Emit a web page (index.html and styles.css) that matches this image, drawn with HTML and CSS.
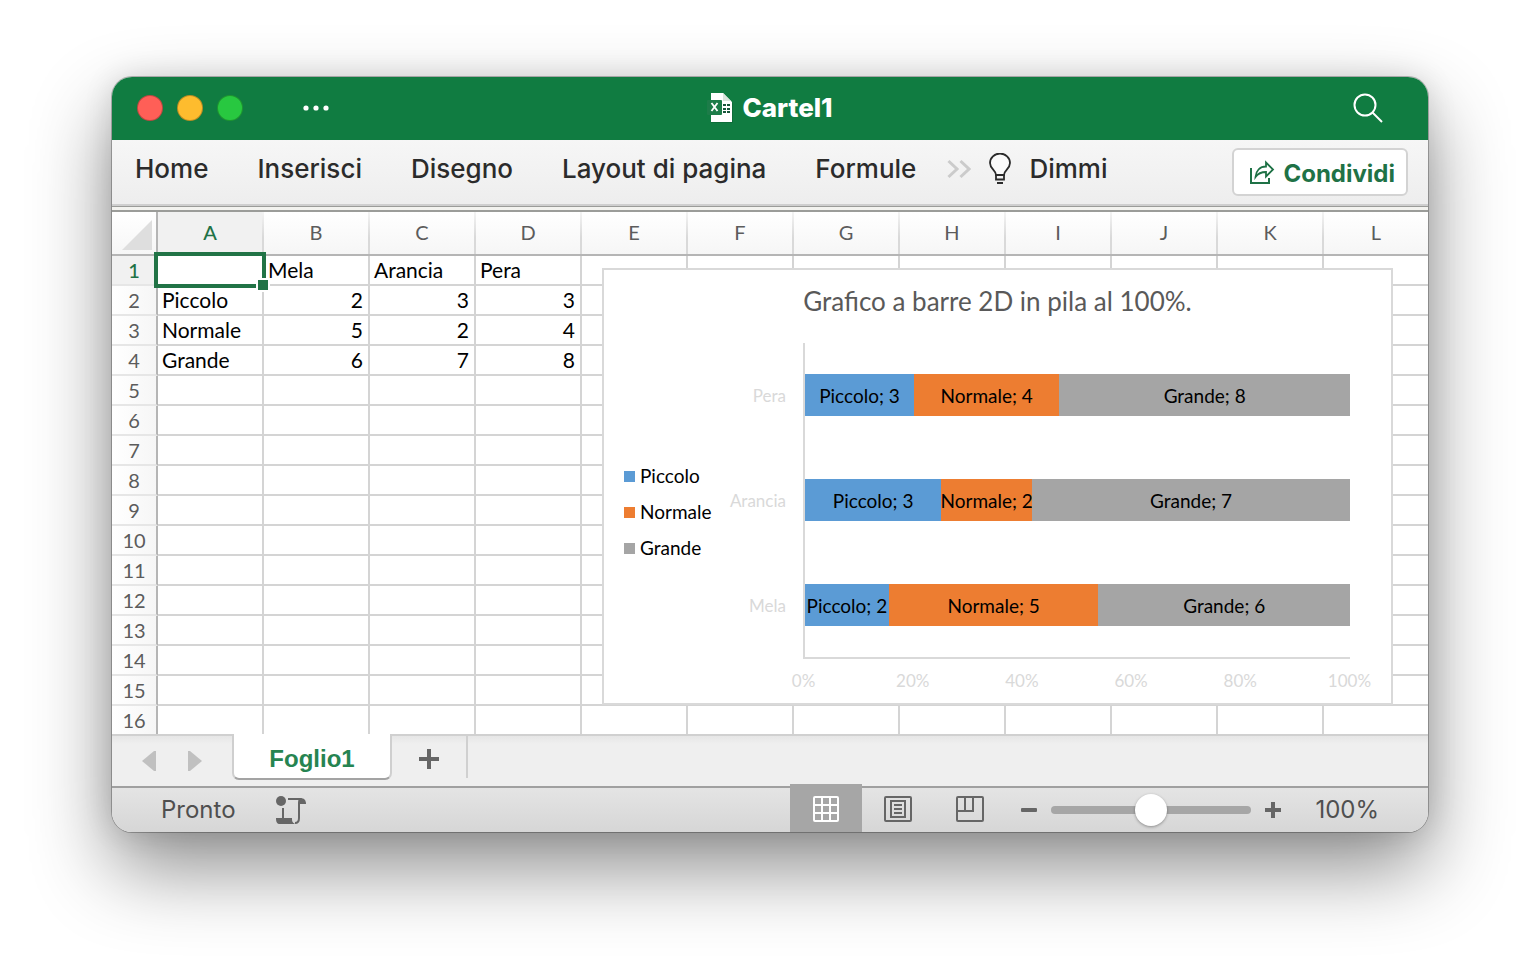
FILE: index.html
```html
<!DOCTYPE html>
<html lang="it">
<head>
    <meta charset="utf-8">
    <title>Cartel1</title>
    <link rel="stylesheet" href="styles.css">
</head>
<body>
    <div class="window">
        <header class="title-bar">
            <div class="title-left">
                <button class="light red" aria-label="Chiudi"></button>
                <button class="light yellow" aria-label="Riduci"></button>
                <button class="light green" aria-label="Ingrandisci"></button>
                <button class="icon-button more" aria-label="Altro">
                    <svg width="26" height="6" viewBox="0 0 26 6" fill="#fff"><circle cx="3" cy="3" r="2.6"/><circle cx="13" cy="3" r="2.6"/><circle cx="23" cy="3" r="2.6"/></svg>
                </button>
            </div>
            <h1 class="document-name">
                <svg width="26" height="32" viewBox="0 0 26 32">
                    <path d="M4 2h12l10 9v20H4z" fill="#0b5c2f" opacity=".5"/>
                    <path d="M4 1h12l9 9v20H4z" fill="#fff"/>
                    <path d="M16 1v8h8z" fill="#d9e5dc"/>
                    <path d="M16 12h3v2h-3zM20 12h3v2h-3zM16 16h3v2h-3zM20 16h3v2h-3zM16 19h3v2h-3zM20 19h3v2h-3z" fill="#17563a"/>
                    <rect x="0" y="8" width="15" height="15" rx="1" fill="#1d7c49"/>
                    <path d="M4.500 11l6 8M10.500 11l-6 8" stroke="#fff" stroke-width="1.800"/>
                </svg>
                Cartel1
            </h1>
            <button class="icon-button search" aria-label="Cerca">
                <svg width="30" height="30" viewBox="0 0 30 30" fill="none" stroke="#fff" stroke-width="2"><circle cx="12" cy="12" r="10.5"/><path d="M19.5 19.5L29 29"/></svg>
            </button>
        </header>

        <nav class="ribbon">
            <button class="ribbon-tab">Home</button>
            <button class="ribbon-tab">Inserisci</button>
            <button class="ribbon-tab">Disegno</button>
            <button class="ribbon-tab">Layout di pagina</button>
            <button class="ribbon-tab">Formule</button>
            <div class="ribbon-help">
                <button class="icon-button" aria-label="Altre schede">
                    <svg width="24" height="20" viewBox="0 0 24 20" fill="none" stroke="#cbcbcb" stroke-width="3"><path d="M1.500 2l8.500 8-8.500 8M13.500 2l8.500 8-8.500 8"/></svg>
                </button>
                <button class="ribbon-tab tell-me">
                    <svg width="22" height="32" viewBox="0 0 22 32" fill="none" stroke="#2b2b2b" stroke-width="1.800">
                        <path d="M7 22c0-5-6-6-6-12a10 9.500 0 0 1 20 0c0 6-6 7-6 12z" fill="#fafafa"/>
                        <path d="M7 22v4.500h8V22"/>
                        <path d="M8 30h6" stroke-width="2"/>
                    </svg>
                    Dimmi
                </button>
            </div>
            <button class="share">
                <svg width="26" height="26" viewBox="0 0 26 26" fill="none" stroke="#1f7246" stroke-width="2">
                    <path d="M2 8v15h18v-5"/>
                    <path d="M6.500 17C7 10.500 11 6.500 17 6.500V2.500l7 7-7 7v-4.500c-5 0-8 1.500-10.500 5z" stroke-width="1.800"/>
                </svg>
                Condividi
            </button>
        </nav>

        <main class="sheet">
            <table class="cells">
                <thead>
                    <tr>
                        <th class="corner"><svg width="30" height="30" viewBox="0 0 30 30"><path d="M30 0v30H0z" fill="#dedede"/></svg></th>
                        <th class="active">A</th><th>B</th><th>C</th><th>D</th><th>E</th><th>F</th><th>G</th><th>H</th><th>I</th><th>J</th><th>K</th><th>L</th>
                    </tr>
                </thead>
                <tbody>
                    <tr><th class="active">1</th><td class="selected"><span class="selection"></span></td><td>Mela</td><td>Arancia</td><td>Pera</td><td></td><td></td><td></td><td></td><td></td><td></td><td></td><td></td></tr>
                    <tr><th>2</th><td>Piccolo</td><td class="number">2</td><td class="number">3</td><td class="number">3</td><td></td><td></td><td></td><td></td><td></td><td></td><td></td><td></td></tr>
                    <tr><th>3</th><td>Normale</td><td class="number">5</td><td class="number">2</td><td class="number">4</td><td></td><td></td><td></td><td></td><td></td><td></td><td></td><td></td></tr>
                    <tr><th>4</th><td>Grande</td><td class="number">6</td><td class="number">7</td><td class="number">8</td><td></td><td></td><td></td><td></td><td></td><td></td><td></td><td></td></tr>
                    <tr><th>5</th><td></td><td></td><td></td><td></td><td></td><td></td><td></td><td></td><td></td><td></td><td></td><td></td></tr>
                    <tr><th>6</th><td></td><td></td><td></td><td></td><td></td><td></td><td></td><td></td><td></td><td></td><td></td><td></td></tr>
                    <tr><th>7</th><td></td><td></td><td></td><td></td><td></td><td></td><td></td><td></td><td></td><td></td><td></td><td></td></tr>
                    <tr><th>8</th><td></td><td></td><td></td><td></td><td></td><td></td><td></td><td></td><td></td><td></td><td></td><td></td></tr>
                    <tr><th>9</th><td></td><td></td><td></td><td></td><td></td><td></td><td></td><td></td><td></td><td></td><td></td><td></td></tr>
                    <tr><th>10</th><td></td><td></td><td></td><td></td><td></td><td></td><td></td><td></td><td></td><td></td><td></td><td></td></tr>
                    <tr><th>11</th><td></td><td></td><td></td><td></td><td></td><td></td><td></td><td></td><td></td><td></td><td></td><td></td></tr>
                    <tr><th>12</th><td></td><td></td><td></td><td></td><td></td><td></td><td></td><td></td><td></td><td></td><td></td><td></td></tr>
                    <tr><th>13</th><td></td><td></td><td></td><td></td><td></td><td></td><td></td><td></td><td></td><td></td><td></td><td></td></tr>
                    <tr><th>14</th><td></td><td></td><td></td><td></td><td></td><td></td><td></td><td></td><td></td><td></td><td></td><td></td></tr>
                    <tr><th>15</th><td></td><td></td><td></td><td></td><td></td><td></td><td></td><td></td><td></td><td></td><td></td><td></td></tr>
                    <tr class="last"><th>16</th><td></td><td></td><td></td><td></td><td></td><td></td><td></td><td></td><td></td><td></td><td></td><td></td></tr>
                </tbody>
            </table>

            <!-- chart floats over the cells -->
            <section class="chart">
                <h2 class="chart-title">Grafico a barre 2D in pila al 100%.</h2>
                <div class="chart-body">
                    <ul class="legend">
                        <li><span class="swatch piccolo"></span>Piccolo</li>
                        <li><span class="swatch normale"></span>Normale</li>
                        <li><span class="swatch grande"></span>Grande</li>
                    </ul>
                    <div class="categories">
                        <span>Pera</span>
                        <span>Arancia</span>
                        <span>Mela</span>
                    </div>
                    <div class="plot">
                        <div class="bar">
                            <span class="piccolo" style="width: 20%">Piccolo; 3</span>
                            <span class="normale" style="width: 26.667%">Normale; 4</span>
                            <span class="grande" style="width: 53.333%">Grande; 8</span>
                        </div>
                        <div class="bar">
                            <span class="piccolo" style="width: 25%">Piccolo; 3</span>
                            <span class="normale" style="width: 16.667%">Normale; 2</span>
                            <span class="grande" style="width: 58.333%">Grande; 7</span>
                        </div>
                        <div class="bar">
                            <span class="piccolo" style="width: 15.385%">Piccolo; 2</span>
                            <span class="normale" style="width: 38.462%">Normale; 5</span>
                            <span class="grande" style="width: 46.154%">Grande; 6</span>
                        </div>
                    </div>
                    <div class="ticks">
                        <span>0%</span><span>20%</span><span>40%</span><span>60%</span><span>80%</span><span>100%</span>
                    </div>
                </div>
            </section>
        </main>

        <div class="sheet-tabs">
            <div class="sheet-arrows">
                <button class="icon-button" aria-label="Foglio precedente"><svg width="14" height="20" viewBox="0 0 14 20"><path d="M14 0v20h-2L0 10 12 0z" fill="#c0c0c0"/></svg></button>
                <button class="icon-button" aria-label="Foglio successivo"><svg width="14" height="20" viewBox="0 0 14 20"><path d="M0 0v20h2l12-10L2 0z" fill="#c0c0c0"/></svg></button>
            </div>
            <button class="sheet-tab">Foglio1</button>
            <button class="icon-button add-sheet" aria-label="Nuovo foglio"><svg width="20" height="20" viewBox="0 0 20 20"><path d="M8 0h4v8h8v4h-8v8H8v-8H0V8h8z" fill="#666"/></svg></button>
        </div>

        <footer class="status-bar">
            <span class="status">Pronto</span>
            <button class="icon-button" aria-label="Registra macro">
                <svg width="30" height="28" viewBox="0 0 30 28">
                    <circle cx="5" cy="5" r="5" fill="#666"/>
                    <path d="M7 12v11" stroke="#666" stroke-width="2"/>
                    <path d="M12 3h13c-2 0-2 2-2 4v15c0 3-1 5-4 5" fill="none" stroke="#666" stroke-width="2"/>
                    <path d="M24 2c4 0 6 2 6 6h-6z" fill="#666"/>
                    <path d="M0 22h16c0 3 0 4 3 6H4c-3 0-4-2-4-6z" fill="#666"/>
                </svg>
            </button>
            <div class="views">
                <button class="view current" aria-label="Normale"><svg width="26" height="26" viewBox="0 0 26 26" fill="none" stroke="#fff" stroke-width="2"><rect x="1" y="1" width="24" height="24" rx="1"/><path d="M1 9h24M1 17h24M9 1v24M17 1v24"/></svg></button>
                <button class="view" aria-label="Layout di pagina"><svg width="28" height="26" viewBox="0 0 28 26" fill="none" stroke="#666" stroke-width="2"><rect x="1" y="1" width="26" height="24" rx="1"/><path d="M7 5h14v16H7zM10 9h8M10 13h8M10 17h8"/></svg></button>
                <button class="view" aria-label="Anteprima interruzioni"><svg width="28" height="26" viewBox="0 0 28 26" fill="none" stroke="#666" stroke-width="2"><rect x="1" y="1" width="26" height="24" rx="1"/><path d="M1 15h16V1M9 1v14"/></svg></button>
            </div>
            <div class="zoom">
                <button class="icon-button" aria-label="Riduci zoom"><svg width="16" height="16" viewBox="0 0 16 16"><rect y="6" width="16" height="4" rx="1" fill="#666"/></svg></button>
                <input class="zoom-slider" type="range" min="0" max="200" value="100" aria-label="Zoom">
                <button class="icon-button" aria-label="Aumenta zoom"><svg width="16" height="16" viewBox="0 0 16 16"><path d="M6 0h4v6h6v4h-6v6H6v-6H0V6h6z" fill="#666"/></svg></button>
            </div>
            <span class="status">100%</span>
        </footer>
    </div>
</body>
</html>
```
FILE: styles.css
```css
* {
    box-sizing: border-box;
}
body {
    margin: 0;
    min-height: 100vh;
    padding: 77px 112px;
    background: #fff;
    font-family: Inter, "Liberation Sans", sans-serif;
    color: #2b2b2b;
}
button {
    padding: 0;
    border: none;
    background: none;
    font: inherit;
    color: inherit;
}
svg {
    display: block;
}
.icon-button {
    display: flex;
}
.window {
    border-radius: 20px;
    overflow: hidden;
    box-shadow: 0 0 0 1px rgba(0, 0, 0, 0.25), 0 36px 80px rgba(0, 0, 0, 0.45), 0 0 30px rgba(0, 0, 0, 0.12);
}

/* title bar */
.title-bar {
    display: grid;
    grid-template-columns: 1fr auto 1fr;
    align-items: center;
    height: 63px;
    padding: 0 25px 2px;
    background: #107c41;
    color: #fff;
}
.title-left {
    display: flex;
    align-items: center;
    gap: 14px;
}
.light {
    width: 26px;
    height: 26px;
    border: 1px solid rgba(0, 0, 0, 0.25);
    border-radius: 50%;
}
.red {
    background: #ff5f57;
}
.yellow {
    background: #febc2e;
}
.green {
    background: #28c840;
}
.more {
    margin-left: 46px;
}
.document-name {
    display: flex;
    align-items: center;
    gap: 9px;
    margin: 0;
    font-size: 26px;
    font-weight: 800;
}
.search {
    justify-self: end;
    margin-right: 20px;
}

/* ribbon */
.ribbon {
    display: flex;
    align-items: center;
    gap: 49px;
    height: 72px;
    padding: 0 20px 6px 23px;
    background: linear-gradient(#f6f6f6, #ededed);
    border-bottom: 2px solid #9b9c99;
    box-shadow: inset 0 -3px #f3f3ef, inset 0 -4px #9b9c99, inset 0 -6px #cfcfcf;
}
.ribbon-tab {
    font-size: 26px;
    font-weight: 500;
    line-height: 32px;
    margin-bottom: 6px;
    white-space: nowrap;
}
.ribbon-help {
    display: flex;
    align-items: center;
    gap: 18px;
    margin-left: -18px;
}
.ribbon-help .icon-button {
    margin-bottom: 6px;
}
.tell-me {
    display: flex;
    gap: 18px;
}
.share {
    display: flex;
    align-items: center;
    gap: 8px;
    height: 48px;
    margin-left: auto;
    padding: 2px 11px 0 15px;
    border: 2px solid #d3d3d3;
    border-radius: 6px;
    background: #fff;
    color: #1f7246;
    font-size: 24px;
    font-weight: 700;
}

/* sheet */
.sheet {
    position: relative;
    overflow: hidden;
    background: #fff;
    font-family: Lato, "Noto Sans", sans-serif;
}
.cells {
    width: 1318px;
    table-layout: fixed;
    border-collapse: separate;
    border-spacing: 0;
    font-size: 20px;
    line-height: 24px;
    color: #000;
}
.cells th {
    width: 106px;
    padding: 0;
    color: #5c5c5c;
    font-weight: 400;
}
.cells thead th {
    height: 44px;
    padding-bottom: 2px;
    border-right: 2px solid #d9d9d9;
    border-bottom: 2px solid #b5b5b5;
    background: linear-gradient(#fff, #f6f6f6);
    border-image: linear-gradient(#f6f6f6, #d9d9d9 60%, #d9d9d9 95%, #b5b5b5 95%) 2;
    border-top: none;
    border-left: none;
}
.cells thead th.corner {
    width: 46px;
    padding: 8px 0 4px 10px;
    border-image: none;
    border-right-color: #b5b5b5;
}
.cells tbody th {
    height: 30px;
    border-right: 2px solid #b5b5b5;
    border-bottom: 2px solid #e6e6e6;
    background: linear-gradient(90deg, #fff, #f6f6f6);
}
.cells th.active,
.cells thead th.active {
    background: #f1f1f1;
    color: #1f7246;
    font-weight: 500;
}
.cells td {
    height: 30px;
    padding: 0 5px 0 4px;
    border-right: 2px solid #d4d4d4;
    border-bottom: 2px solid #d4d4d4;
    font-size: 21px;
}
.cells td.number {
    text-align: right;
}
.cells .last th,
.cells .last td {
    height: 28px;
    border-bottom: none;
}
.selected {
    position: relative;
}
.selection {
    position: absolute;
    inset: -4px;
    border: 4px solid #217346;
}
.selection::after {
    content: "";
    position: absolute;
    right: -8px;
    bottom: -8px;
    width: 10px;
    height: 10px;
    border: 2px solid #fff;
    background: #217346;
}

/* chart */
.chart {
    position: absolute;
    top: 56px;
    left: 490px;
    width: 791px;
    height: 437px;
    border: 2px solid #d9d9d9;
    background: #fff;
}
.chart-title {
    margin: 15px 0 26px;
    color: #595959;
    font-size: 26px;
    font-weight: 400;
    line-height: 32px;
    text-align: center;
}
.chart-body {
    display: grid;
    grid-template-columns: 110px 89px 1fr;
    grid-template-rows: 316px auto;
    padding: 0 41px 0 0;
    font-size: 19px;
    line-height: 24px;
    color: #000;
}
.legend {
    align-self: center;
    margin: 0;
    padding: 22px 0 0 20px;
    list-style: none;
    line-height: 36px;
}
.legend li {
    display: flex;
    align-items: center;
    gap: 5px;
}
.swatch {
    width: 11px;
    height: 11px;
}
.piccolo {
    background: #5b9bd5;
}
.normale {
    background: #ed7d31;
}
.grande {
    background: #a5a5a5;
}
.categories {
    display: flex;
    flex-direction: column;
    justify-content: space-around;
    padding-right: 17px;
    color: #d9d9d9;
    font-size: 17px;
    text-align: right;
}
.plot {
    display: flex;
    flex-direction: column;
    justify-content: space-around;
    border-left: 2px solid #d9d9d9;
    border-bottom: 2px solid #d9d9d9;
}
.bar {
    display: flex;
    height: 42px;
}
.bar span {
    display: flex;
    align-items: center;
    justify-content: center;
    min-width: 0;
    padding-top: 2px;
    white-space: nowrap;
}
.ticks {
    grid-column: 3;
    display: grid;
    grid-template-columns: repeat(6, 1fr);
    margin: 10px -54px 0;
    color: #d9d9d9;
    font-size: 17px;
    text-align: center;
}

/* sheet tabs */
.sheet-tabs {
    display: flex;
    height: 52px;
    border-top: 2px solid #d0d0d0;
    background: linear-gradient(#e6e6e6, #efefef 8px);
}
.sheet-arrows {
    display: flex;
    align-items: center;
    gap: 32px;
    width: 120px;
    padding-left: 30px;
}
.sheet-tab {
    position: relative;
    width: 160px;
    height: 46px;
    margin-top: -2px;
    padding-top: 6px;
    border: 2px solid #cfcfcf;
    border-top: none;
    border-bottom-color: #a3a3a3;
    border-radius: 0 0 7px 7px;
    background: #fff;
    color: #268451;
    font-family: "Liberation Sans", Arial, sans-serif;
    font-size: 24px;
    font-weight: 700;
}
.add-sheet {
    align-items: center;
    justify-content: center;
    width: 76px;
    height: 42px;
    padding-top: 4px;
    border-right: 2px solid #d0d0d0;
}

/* status bar */
.status-bar {
    display: flex;
    align-items: center;
    height: 46px;
    padding: 0 49px;
    border-top: 2px solid #a0a0a0;
    background: linear-gradient(#e4e4e4, #d6d6d6);
    color: #4f4f4f;
}
.status {
    font-size: 24px;
    line-height: 32px;
}
.status-bar > .icon-button {
    margin-left: 40px;
}
.views {
    display: flex;
    align-self: stretch;
    margin: -4px 0 0 auto;
}
.view {
    display: flex;
    align-items: center;
    justify-content: center;
    width: 72px;
    padding-top: 2px;
}
.current {
    background: #a6a6a6;
}
.zoom {
    display: flex;
    align-items: center;
    gap: 14px;
    margin: 0 34px 0 15px;
}
.zoom-slider {
    appearance: none;
    width: 200px;
    height: 32px;
    margin: 0;
    background: none;
}
.zoom-slider::-webkit-slider-runnable-track {
    height: 8px;
    border-radius: 4px;
    background: #a6a6a6;
}
.zoom-slider::-webkit-slider-thumb {
    appearance: none;
    width: 32px;
    height: 32px;
    margin-top: -12px;
    border-radius: 50%;
    background: #fff;
    box-shadow: 0 1px 3px rgba(0, 0, 0, 0.35);
}
```
